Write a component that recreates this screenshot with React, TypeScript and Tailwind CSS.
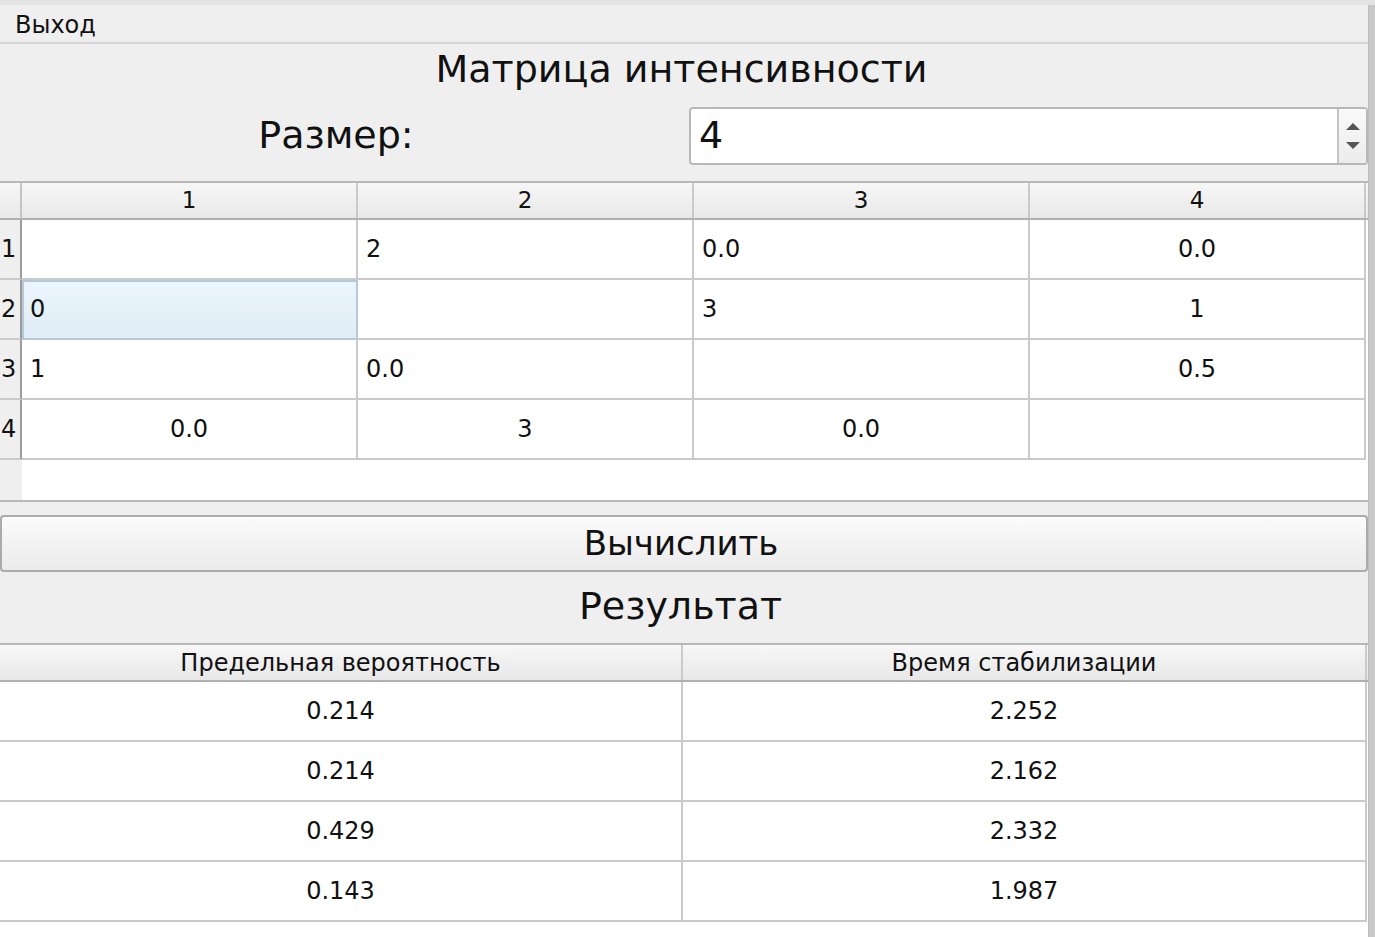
import React from "react";

type Cell = { t: string; a: "l" | "c"; sel?: boolean };

const matrix: Cell[][] = [
  [
    { t: "", a: "l" },
    { t: "2", a: "l" },
    { t: "0.0", a: "l" },
    { t: "0.0", a: "c" },
  ],
  [
    { t: "0", a: "l", sel: true },
    { t: "", a: "l" },
    { t: "3", a: "l" },
    { t: "1", a: "c" },
  ],
  [
    { t: "1", a: "l" },
    { t: "0.0", a: "l" },
    { t: "", a: "l" },
    { t: "0.5", a: "c" },
  ],
  [
    { t: "0.0", a: "c" },
    { t: "3", a: "c" },
    { t: "0.0", a: "c" },
    { t: "", a: "c" },
  ],
];

const results = [
  ["0.214", "2.252"],
  ["0.214", "2.162"],
  ["0.429", "2.332"],
  ["0.143", "1.987"],
];

export default function App() {
  return (
    <div className="w-[1375px] h-[937px] overflow-hidden flex flex-col bg-[#efefef] text-[#111] font-['DejaVu_Sans',sans-serif]">
      <div className="h-[5px] bg-[#e3e3e3] shrink-0" />
      <div className="flex flex-1 min-h-0">
        <div className="w-[1368px] flex flex-col">
          {/* меню */}
          <div className="h-[39px] shrink-0 border-b-2 border-[#d6d6d6] flex items-center pl-[15px] pt-[2px] text-[24px]">
            Выход
          </div>

          {/* заголовок */}
          <div className="h-[50px] shrink-0 flex items-center justify-center pr-[5px] text-[38px]">
            Матрица интенсивности
          </div>

          {/* размер */}
          <div className="h-[59px] mt-[12px] shrink-0 flex items-center">
            <div className="w-[672px] flex justify-center text-[38px]">Размер:</div>
            <div className="ml-[17px] flex-1 h-[58px] flex bg-white border-2 border-[#b8b8b8] rounded-[4px]">
              <div className="flex-1 flex items-center pl-[8px] text-[38px]">4</div>
              <div className="w-[29px] border-l-2 border-[#c4c4c4] bg-gradient-to-b from-[#fafafa] to-[#ececec] flex flex-col items-center justify-center gap-[12px]">
                <svg width="14" height="7" viewBox="0 0 14 7">
                  <path d="M0 7 L7 0 L14 7 Z" fill="#555" />
                </svg>
                <svg width="14" height="7" viewBox="0 0 14 7">
                  <path d="M0 0 L14 0 L7 7 Z" fill="#555" />
                </svg>
              </div>
            </div>
          </div>

          {/* матрица */}
          <div className="mt-[16px] h-[321px] shrink-0 flex flex-col border-t-2 border-b-2 border-[#b8b8b8] bg-white">
            <div className="flex h-[37px] shrink-0 border-b-2 border-[#b0b0b0] bg-gradient-to-b from-[#f7f7f7] to-[#e8e8e8] text-[23px]">
              <div className="w-[22px] border-r-2 border-[#c4c4c4]" />
              {[1, 2, 3, 4].map((n) => (
                <div
                  key={n}
                  className="w-[336px] border-r-2 border-[#cacaca] flex items-center justify-center"
                >
                  {n}
                </div>
              ))}
            </div>
            {matrix.map((row, i) => (
              <div key={i} className="flex h-[60px] shrink-0 text-[24px]">
                <div className="w-[22px] border-r-2 border-[#9c9c9c] border-b-2 border-b-[#cacaca] bg-[#efefef] flex items-center pl-[1px]">
                  {i + 1}
                </div>
                {row.map((c, j) => (
                  <div
                    key={j}
                    className={`w-[336px] border-r-2 border-b-2 border-[#cacaca] flex items-center ${
                      c.a === "c" ? "justify-center" : "pl-[8px]"
                    } ${c.sel ? "bg-gradient-to-b from-[#eaf5fd] to-[#e1edf6] outline-2 outline-[#b5c9d8] -outline-offset-2" : ""}`}
                  >
                    {c.t}
                  </div>
                ))}
              </div>
            ))}
            <div className="flex flex-1">
              <div className="w-[22px] bg-[#efefef]" />
              <div className="flex-1" />
            </div>
          </div>

          {/* кнопка */}
          <div className="mt-[13px] h-[57px] shrink-0 border-2 border-[#ababab] rounded-[4px] bg-gradient-to-b from-[#fbfbfb] to-[#ebebeb] flex items-center justify-center pr-[6px] text-[34px]">
            Вычислить
          </div>

          {/* результат */}
          <div className="h-[71px] shrink-0 flex items-center justify-center pr-[7px] pb-[2px] text-[38px]">
            Результат
          </div>

          <div className="flex-1 bg-white flex flex-col">
            <div className="flex h-[39px] shrink-0 border-t-2 border-[#b8b8b8] border-b-2 border-b-[#b0b0b0] bg-gradient-to-b from-[#f7f7f7] to-[#e8e8e8] text-[24px]">
              <div className="w-[683px] border-r-2 border-[#cacaca] flex items-center justify-center">
                Предельная вероятность
              </div>
              <div className="w-[684px] border-r-2 border-[#cacaca] flex items-center justify-center">
                Время стабилизации
              </div>
            </div>
            {results.map((r, i) => (
              <div key={i} className="flex h-[60px] shrink-0 text-[24px]">
                <div className="w-[683px] border-r-2 border-b-2 border-[#cacaca] flex items-center justify-center">
                  {r[0]}
                </div>
                <div className="w-[684px] border-r-2 border-b-2 border-[#cacaca] flex items-center justify-center">
                  {r[1]}
                </div>
              </div>
            ))}
          </div>
        </div>
        <div className="w-[7px] bg-[#c9c9c9] border-l border-[#bdbdbd]" />
      </div>
    </div>
  );
}
